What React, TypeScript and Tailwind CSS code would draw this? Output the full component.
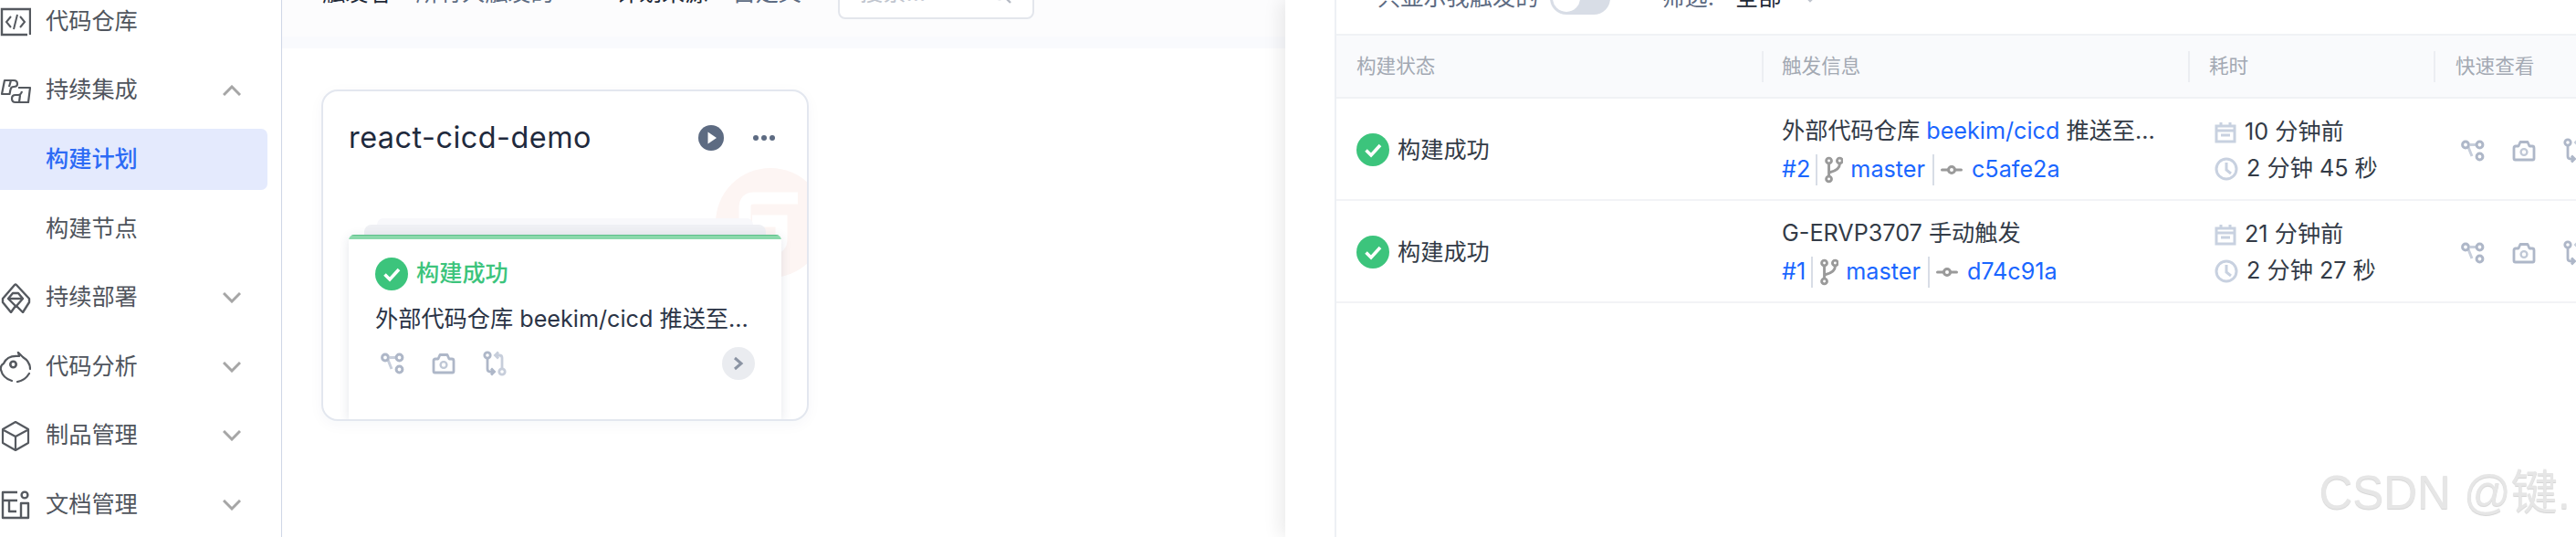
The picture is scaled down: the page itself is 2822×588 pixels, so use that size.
import React from "react";
import { GitCommitHorizontal } from "lucide-react";

const font = "font-['Inter','Noto_Sans_CJK_SC',sans-serif]";

// sidebar icons, all drawn in the same 34px box
const CodeIcon = () => (
  <svg width="34" height="34" viewBox="0 0 34 34" fill="none" stroke="#55595f" strokeWidth="2.4">
    <path d="M33 31V3H2V31H30" />
    <path d="M12 11L7 17L12 23M22 11L27 17L22 23M19 9L15 25" strokeWidth="2" />
  </svg>
);

const CiIcon = () => (
  <svg width="34" height="34" viewBox="0 0 34 34" fill="none" stroke="#55595f" strokeWidth="2.2" strokeLinejoin="round">
    <path d="M2 21L5 6H15Q19 6 19 10Q19 13 15 13Q12 13 11.5 16L10.5 21Z" />
    <path d="M12 6L10 13" />
    <path d="M20 14H33L31 30H17Q13 30 13 26Q13 22 17 22H20Q23 22 24 18" />
    <path d="M22 22L21 30" />
  </svg>
);

const DeployIcon = () => (
  <svg width="34" height="34" viewBox="0 0 34 34" fill="none" stroke="#55595f" strokeWidth="2.4" strokeLinejoin="round">
    <path d="M3 18L16 3Q17 2 18 3L32 18V22L25 33L18 26L25 18L20 12H14L9 18L17 26L12 33L3 22Z" />
    <path d="M9 18H25" />
  </svg>
);

const AnalysisIcon = () => (
  <svg width="34" height="34" viewBox="0 0 34 34" fill="none" stroke="#55595f" strokeWidth="2.2" strokeLinecap="round">
    <path d="M21 5L20 1L25 6Q33 11 33 19" />
    <path d="M20 5Q8 4 4 13Q0 15 1 20Q3 29 13 32" />
    <path d="M19 33Q27 32 32 24" />
    <circle cx="14.5" cy="14" r="3.2" strokeWidth="2.6" />
  </svg>
);

const ProductIcon = () => (
  <svg width="34" height="34" viewBox="0 0 34 34" fill="none" stroke="#55595f" strokeWidth="2.2" strokeLinejoin="round">
    <path d="M17 2L31 10V25L17 33L3 25V10Z" />
    <path d="M4 11L17 18L30 11M17 18V32" />
  </svg>
);

const DocIcon = () => (
  <svg width="34" height="34" viewBox="0 0 34 34" fill="none" stroke="#55595f" strokeWidth="2.4" strokeLinejoin="round">
    <path d="M19 3H3V31H31V15H23V31" />
    <path d="M3 12H19M10 12V24H18" />
    <circle cx="27" cy="6" r="3.4" />
  </svg>
);

const Chevron = ({ up }: { up?: boolean }) => (
  <svg width="20" height="12" viewBox="0 0 20 12" fill="none" stroke="#a6a6a6" strokeWidth="3">
    <path d={up ? "M1 11L10 2L19 11" : "M1 1L10 10L19 1"} />
  </svg>
);

const SuccessIcon = ({ size }: { size: number }) => (
  <svg width={size} height={size} viewBox="0 0 36 36" className="shrink-0">
    <circle cx="18" cy="18" r="18" fill="#3cc47c" />
    <path d="M10.5 18.5L16 24L26 13" fill="none" stroke="#fff" strokeWidth="3.6" />
  </svg>
);

const PipelineIcon = () => (
  <svg width="26" height="24" viewBox="0 0 26 24" fill="none" stroke="#aeb7c8" strokeWidth="3">
    <path d="M10 5.5H16M8 8L12 18" stroke="#c7cedb" />
    <circle cx="5" cy="5.5" r="3.4" />
    <circle cx="20.5" cy="5.5" r="3.4" />
    <circle cx="20.5" cy="18.5" r="3.4" />
  </svg>
);

const CameraIcon = () => (
  <svg width="26" height="24" viewBox="0 0 26 24" fill="none" stroke="#aeb7c8" strokeWidth="2.8" strokeLinejoin="round">
    <path d="M3.5 22Q2 22 2 20.5V9Q2 7 4 7H7L9 2.5H17L19 7H22Q24 7 24 9V20.5Q24 22 22.5 22Z" />
    <circle cx="13" cy="13.5" r="3.4" stroke="#c0c8d6" strokeWidth="2.4" />
  </svg>
);

const MergeIcon = () => (
  <svg width="26" height="28" viewBox="0 0 26 28" fill="none" stroke="#aeb7c8" strokeWidth="2.8">
    <circle cx="5" cy="5" r="3.2" />
    <path d="M5 9V20Q5 23 8 23H11M9 19.5L12.5 23L9 26.5" />
    <circle cx="21" cy="23" r="3.2" stroke="#c7cedb" />
    <path d="M21 19V8Q21 5 18 5H15M17 1.5L13.5 5L17 8.5" stroke="#c7cedb" />
  </svg>
);

const QuickIcons = () => (
  <div className="flex items-center gap-[30px]">
    <PipelineIcon />
    <CameraIcon />
    <MergeIcon />
  </div>
);

const BranchIcon = () => (
  <svg width="20" height="32" viewBox="0 0 22 34" fill="none" stroke="#9a9a9a" strokeWidth="3.2" className="shrink-0">
    <circle cx="5" cy="6" r="3.2" />
    <circle cx="18" cy="6" r="3.2" />
    <circle cx="5" cy="28" r="3.2" />
    <path d="M5 10V24M18 10Q18 17 6 20" />
  </svg>
);

const CalendarIcon = () => (
  <svg width="24" height="24" viewBox="0 0 24 24" fill="none" stroke="#c8d1e0" strokeWidth="3" className="shrink-0">
    <path d="M2 5H22V22H2Z" />
    <path d="M2 10H22M7 1V6M17 1V6M7 15H17" />
  </svg>
);

const ClockIcon = () => (
  <svg width="26" height="26" viewBox="0 0 26 26" fill="none" stroke="#c8d1e0" strokeWidth="3" className="shrink-0">
    <circle cx="13" cy="13" r="11" />
    <path d="M13 6V14L18 18" />
  </svg>
);

const navItems = [
  { label: "代码仓库", icon: <CodeIcon /> },
  { label: "持续集成", icon: <CiIcon />, arrow: "up" },
  { label: "构建计划", active: true },
  { label: "构建节点" },
  { label: "持续部署", icon: <DeployIcon />, arrow: "down" },
  { label: "代码分析", icon: <AnalysisIcon />, arrow: "down" },
  { label: "制品管理", icon: <ProductIcon />, arrow: "down" },
  { label: "文档管理", icon: <DocIcon />, arrow: "down" },
];

const builds = [
  { title: "外部代码仓库", repo: "beekim/cicd", tail: "推送至...", id: "#2", commit: "c5afe2a", ago: "10 分钟前", took: "2 分钟 45 秒" },
  { title: "G-ERVP3707 手动触发", id: "#1", commit: "d74c91a", ago: "21 分钟前", took: "2 分钟 27 秒" },
];

const Sidebar = () => (
  <aside className="w-[309px] shrink-0 border-r border-[#cfd6e6] bg-white">
    <div className="-mt-[14px] flex flex-col">
      {navItems.map((item) => (
        <div key={item.label} className="h-[75.6px] pr-[15px] flex items-center">
          <div
            className={`flex h-[67px] w-full items-center rounded-r-[7px] pr-[29px] ${item.active ? "bg-[#e4eafd]" : ""}`}
          >
            <div className="w-[50px] shrink-0">{item.icon}</div>
            <span className={`flex-1 text-[25.2px] ${item.active ? "font-medium text-[#2d6bf5]" : "text-[#50555d]"}`}>
              {item.label}
            </span>
            {item.arrow && <Chevron up={item.arrow === "up"} />}
          </div>
        </div>
      ))}
    </div>
  </aside>
);

const PlanCard = () => (
  <div className="relative ml-[43px] mt-[45px] flex h-[363px] w-[534px] flex-col overflow-hidden rounded-[18px] border-2 border-[#e3e7ef] bg-white shadow-[0_4px_16px_rgba(30,50,90,0.04)]">
    {/* faint logo behind the build stack */}
    <svg width="100" height="124" viewBox="0 0 100 124" className="absolute right-0 top-[84px]">
      <circle cx="60" cy="60" r="60" fill="#fdf5f3" />
      <path d="M90 33H42Q32 33 32 43V78Q32 88 42 88H62Q72 88 72 78V58H40" fill="none" stroke="#fff" strokeWidth="13" />
    </svg>
    <div className="relative flex h-[100px] shrink-0 items-center pl-[28px] pr-[34px] pt-[2px]">
      <span className="flex-1 text-[32.4px] tracking-[0.5px] text-[#1f2a3d]">react-cicd-demo</span>
      <svg width="28" height="28" viewBox="0 0 28 28">
        <circle cx="14" cy="14" r="14" fill="#5d6b82" />
        <path d="M10.5 7.5L20 14L10.5 20.5Z" fill="#fff" />
      </svg>
      <svg width="26" height="8" viewBox="0 0 26 8" className="ml-[31px]">
        <circle cx="4" cy="4" r="3" fill="#5d6b82" />
        <circle cx="13" cy="4" r="3" fill="#5d6b82" />
        <circle cx="22" cy="4" r="3" fill="#5d6b82" />
      </svg>
    </div>
    <div className="relative mt-[39px] flex flex-1 flex-col">
      <div className="mx-[59px] h-[7px] rounded-t-[8px] bg-[#f8f8fb]" />
      <div className="mx-[45px] h-[11px] rounded-t-[8px] bg-[#eff0f4]" />
      <div className="mx-[28px] flex flex-1 flex-col overflow-hidden rounded-t-[6px] bg-white shadow-[0_2px_12px_rgba(30,50,90,0.12)]">
        <div className="h-[5px] shrink-0 border-t border-[#5cc08a] bg-[#8ad8ab]" />
        <div className="flex items-center gap-[9px] pl-[29px] pt-[20px]">
          <SuccessIcon size={36} />
          <span className="text-[25.2px] font-medium leading-none text-[#3cc47c]">构建成功</span>
        </div>
        <div className="whitespace-nowrap pl-[29px] pt-[12px] text-[25.2px] leading-[38px] text-[#2b3446]">
          外部代码仓库 beekim/cicd 推送至...
        </div>
        <div className="flex items-center pl-[35px] pr-[29px] pt-[12px]">
          <QuickIcons />
          <div className="ml-auto flex h-[36px] w-[36px] items-center justify-center rounded-full bg-[#eaecf0]">
            <svg width="12" height="16" viewBox="0 0 12 16" fill="none" stroke="#8b94a3" strokeWidth="3">
              <path d="M2 2L9 8L2 14" />
            </svg>
          </div>
        </div>
      </div>
    </div>
  </div>
);

const Main = () => (
  <main className="min-w-0 flex-1 bg-white">
    <div className="-mt-[36px] flex h-[76px] items-center bg-[#fcfcfd] pb-[19px] pl-[44px] text-[25.2px]">
      <span className="text-[#1f2937]">触发者</span>
      <span className="ml-[27px] text-[#5d6b82]">所有人触发的</span>
      <span className="ml-[68px] text-[#1f2937]">计划来源</span>
      <span className="ml-[27px] text-[#5d6b82]">自定义</span>
      <div className="ml-[40px] flex h-[57px] w-[215px] items-center rounded-[8px] border-2 border-[#e3e6ec] bg-white px-[22px] text-[#c0c5ce]">
        <span className="flex-1">搜索...</span>
        <svg width="24" height="24" viewBox="0 0 24 24" fill="none" stroke="#b5bac4" strokeWidth="2.4">
          <circle cx="10" cy="10" r="8" />
          <path d="M16 16L22 22" />
        </svg>
      </div>
    </div>
    <div className="h-[13px] bg-[#f9fafd]" />
    <PlanCard />
  </main>
);

const Drawer = () => (
  <section className="w-[1414px] shrink-0 bg-white pl-[54px] shadow-[-6px_0_18px_rgba(0,0,0,0.08)]">
    <div className="flex h-full flex-col border-l-2 border-[#edf0f4]">
      <div className="-mt-[42px] flex h-[79px] shrink-0 items-center pl-[45px] text-[25.2px]">
        <span className="text-[#5d6b82]">只显示我触发的</span>
        <div className="ml-[13px] flex h-[36px] w-[66px] items-center rounded-full bg-[#d8dde6] p-[3px]">
          <div className="h-[30px] w-[30px] rounded-full bg-white" />
        </div>
        <span className="ml-[56px] text-[#5d6b82]">筛选:</span>
        <span className="ml-[23px] text-[#1f2937]">全部</span>
        <svg width="16" height="10" viewBox="0 0 16 10" fill="none" stroke="#c0c5ce" strokeWidth="2.4" className="ml-[24px]">
          <path d="M1 1L8 8L15 1" />
        </svg>
      </div>
      <div className="grid h-[71px] shrink-0 grid-cols-[466px_467px_269px_1fr] items-center border-y-2 border-[#f0f2f5] bg-[#f9fafc] text-[21.6px] text-[#a3a9b3]">
        <div className="pl-[22px]">构建状态</div>
        <div className="flex h-[34px] items-center border-l-2 border-[#eceef2] pl-[20px]">触发信息</div>
        <div className="flex h-[34px] items-center border-l-2 border-[#eceef2] pl-[21px]">耗时</div>
        <div className="flex h-[34px] items-center border-l-2 border-[#eceef2] pl-[22px]">快速查看</div>
      </div>
      {builds.map((b) => (
        <div
          key={b.id}
          className="grid h-[112px] shrink-0 grid-cols-[466px_467px_269px_1fr] items-center border-b-2 border-[#f2f3f6] pt-[3px] text-[25.2px] text-[#333b47]"
        >
          <div className="flex items-center gap-[9px] pl-[22px]">
            <SuccessIcon size={36} />
            构建成功
          </div>
          <div className="pl-[22px]">
            <div className="whitespace-nowrap leading-[40px]">
              {b.title}
              {b.repo && <span className="text-[#1a66ff]"> {b.repo} </span>}
              {b.tail}
            </div>
            <div className="mt-[3px] flex h-[40px] items-center text-[#1a66ff]">
              <span className="pr-[6px]">{b.id}</span>
              <div className="mr-[8px] h-[34px] border-l-2 border-[#d8dde6]" />
              <BranchIcon />
              <span className="pl-[8px] pr-[8px]">master</span>
              <div className="mr-[5px] h-[34px] border-l-2 border-[#d8dde6]" />
              <GitCommitHorizontal size={28} color="#9a9a9a" strokeWidth={2.6} className="shrink-0" />
              <span className="pl-[8px]">{b.commit}</span>
            </div>
          </div>
          <div className="pl-[29px]">
            <div className="flex h-[40px] items-center gap-[9px]">
              <CalendarIcon />
              {b.ago}
            </div>
            <div className="flex h-[40px] items-center gap-[9px]">
              <ClockIcon />
              {b.took}
            </div>
          </div>
          <div className="pl-[30px]">
            <QuickIcons />
          </div>
        </div>
      ))}
    </div>
  </section>
);

export default function App() {
  return (
    <div className={`relative flex h-[588px] w-[2822px] overflow-hidden bg-white ${font}`}>
      <Sidebar />
      <Main />
      <Drawer />
      <div className="absolute bottom-[23px] right-[6px] font-['Liberation_Sans','Noto_Sans_CJK_SC',sans-serif] text-[51px] leading-none text-[#e6e6e6] [text-shadow:0_1px_1px_rgba(0,0,0,0.18)]">
        CSDN @键.
      </div>
    </div>
  );
}
